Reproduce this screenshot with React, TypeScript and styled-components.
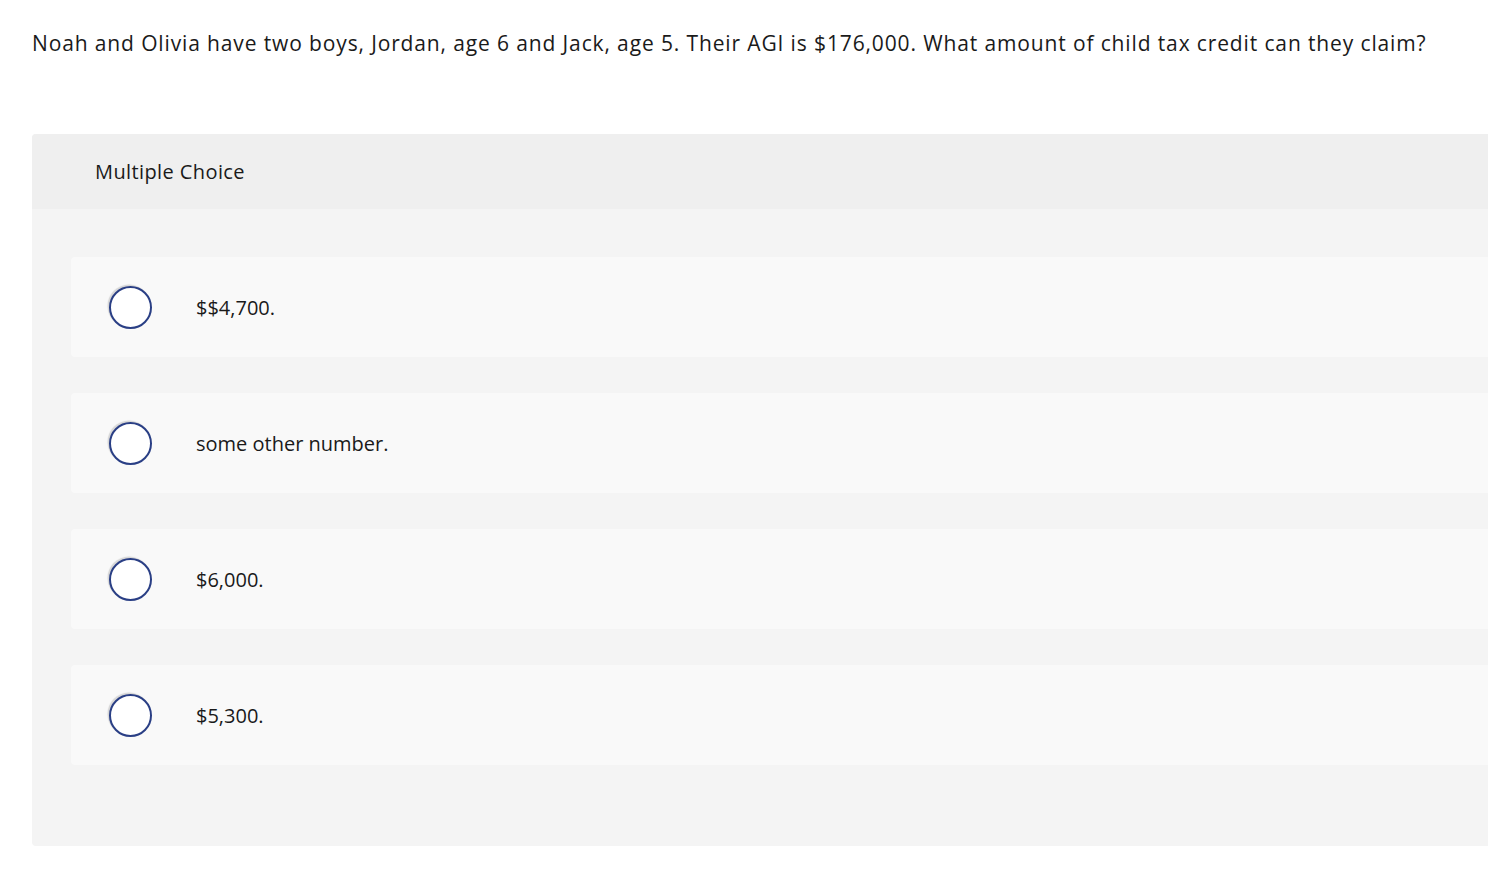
import React from "react";
import styled, { createGlobalStyle } from "styled-components";

const Global = createGlobalStyle`
  html, body { margin: 0; padding: 0; background: #fff; overflow: hidden; }
  body { font-family: "Open Sans", "Liberation Sans", sans-serif; color: #1a1a1a; }
`;

const Page = styled.div`
  display: flex;
  flex-direction: column;
  padding: 28px 0 0 32px;
`;

const Question = styled.p`
  margin: 0;
  font-size: 21px;
  letter-spacing: 0.87px;
  line-height: 30px;
  color: #1a1a1a;
  white-space: nowrap;
`;

const Panel = styled.section`
  margin-top: 76px;
  background: #f4f4f4;
  border-radius: 4px 0 0 4px;
  height: 712px;
  display: flex;
  flex-direction: column;
`;

const PanelHeader = styled.div`
  height: 75px;
  background: #efefef;
  border-radius: 4px 0 0 0;
  display: flex;
  align-items: center;
  padding-left: 63px;
  font-size: 20px;
  letter-spacing: 0.4px;
  color: #1a1a1a;
`;

const Options = styled.div`
  display: flex;
  flex-direction: column;
  gap: 36px;
  padding: 48px 0 0 39px;
`;

const Option = styled.label`
  height: 100px;
  background: #f9f9f9;
  border-radius: 4px 0 0 4px;
  display: flex;
  align-items: center;
  padding-left: 38px;
  cursor: pointer;
`;

const Radio = styled.span`
  width: 39px;
  height: 39px;
  border: 2px solid #2a3f85;
  border-radius: 50%;
  background: #fff;
  flex: none;
  box-shadow: -1.5px -1.5px 1px rgba(0, 0, 0, 0.14);
`;

const OptionText = styled.span`
  margin-left: 44px;
  font-size: 20px;
  color: #1a1a1a;
`;

const choices = ["$$4,700.", "some other number.", "$6,000.", "$5,300."];

export default function App() {
  return (
    <Page>
      <Global />
      <Question>
        Noah and Olivia have two boys, Jordan, age 6 and Jack, age 5. Their AGI is $176,000. What amount of child tax credit can they claim?
      </Question>
      <Panel>
        <PanelHeader>Multiple Choice</PanelHeader>
        <Options>
          {choices.map((c) => (
            <Option key={c}>
              <Radio />
              <OptionText>{c}</OptionText>
            </Option>
          ))}
        </Options>
      </Panel>
    </Page>
  );
}
